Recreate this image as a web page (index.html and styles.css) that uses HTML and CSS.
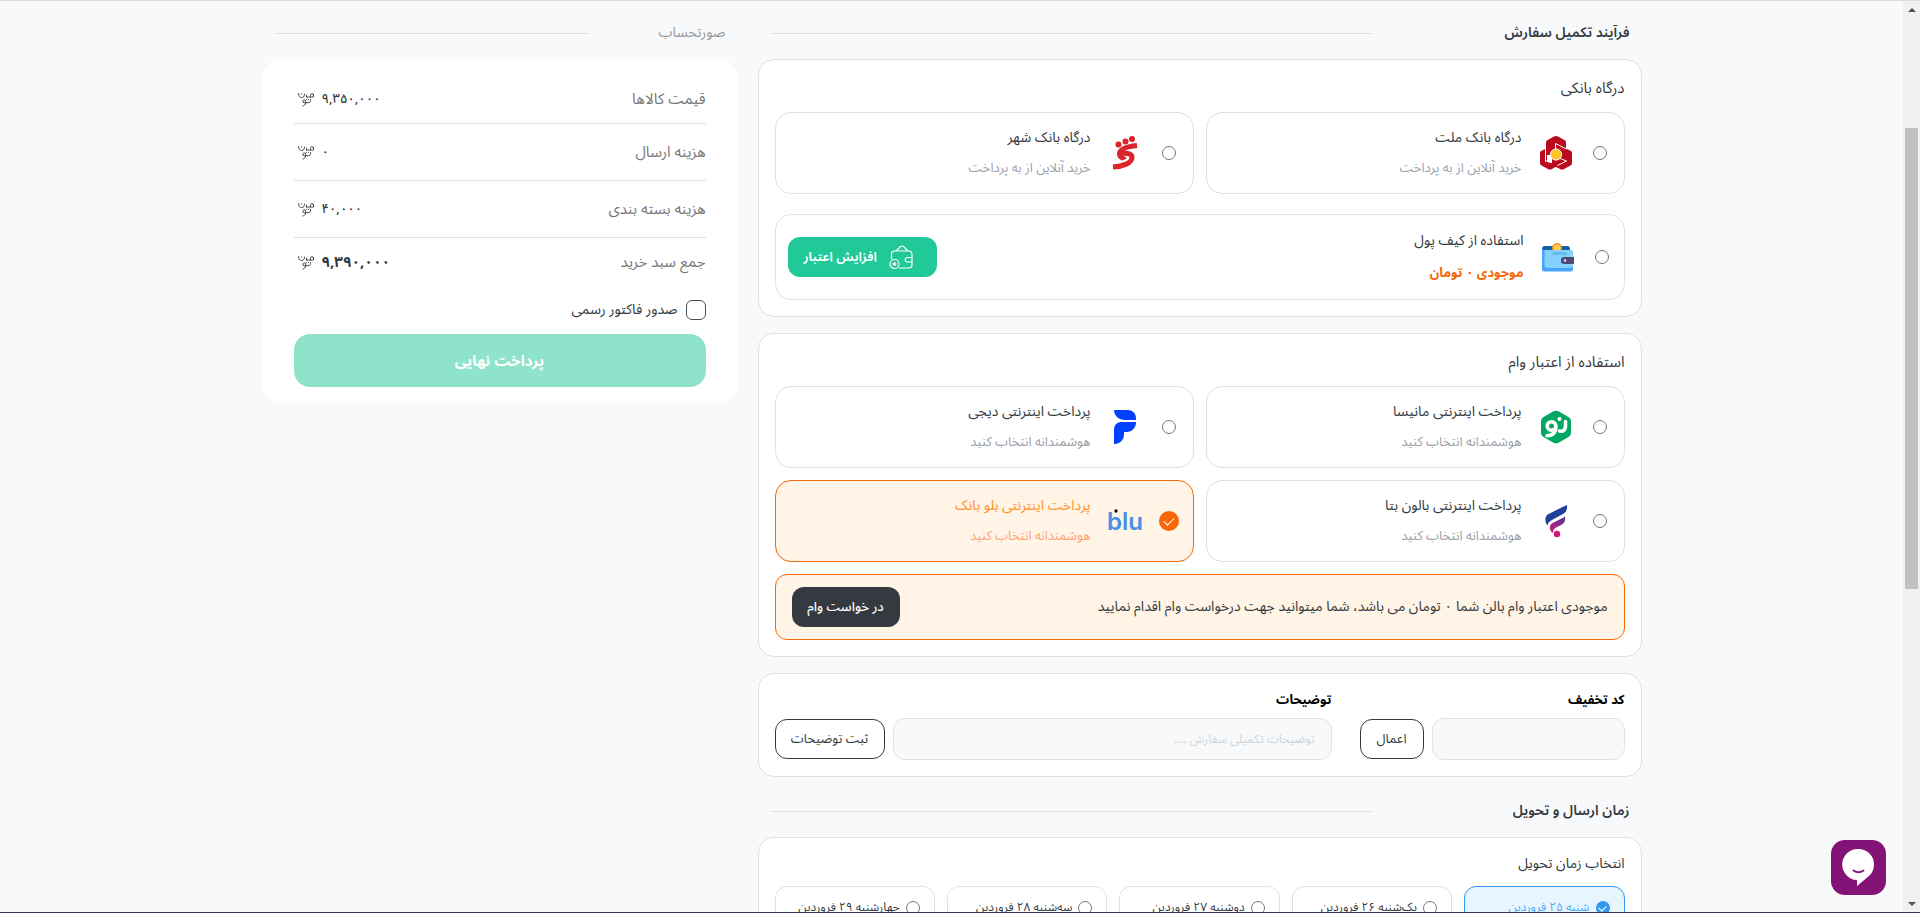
FILE: index.html
```html
<!DOCTYPE html>
<html lang="fa" dir="rtl">
<head>
  <meta charset="UTF-8">
  <meta name="viewport" content="width=device-width, initial-scale=1.0">
  <title>فرآیند تکمیل سفارش</title>
  <link rel="stylesheet" href="styles.css">
</head>
<body>
  <!-- currency symbol, reused in the invoice -->
  <svg class="defs" aria-hidden="true">
    <symbol id="toman" viewBox="0 0 16 16">
      <g fill="none" stroke="currentColor" stroke-width=".9" stroke-linecap="round">
        <path d="M15.500 3.500v2.500H8.500M15.500 4a1.500 1.500 0 1 0-3 .3c0 .8 0 1.200 0 1.700M8.500 6V4M.600 2.500c0 3 1 4 3 4S6.500 5.500 6.500 3"/>
        <path d="M12.500 8.500v1.200c0 1.500-1 2-2.500 2H7.500M7.600 11.200a1.500 1.500 0 1 0-1.500.600h1.500c0 2-1.300 2.900-2.800 3.200"/>
      </g>
      <g fill="currentColor"><circle cx="3.600" cy="2.800" r=".6"/><circle cx="8.600" cy="8.500" r=".5"/><circle cx="10.400" cy="8.500" r=".5"/></g>
    </symbol>
  </svg>

  <div class="window">
    <div class="page">
      <div class="container">

        <main class="checkout">
          <div class="section-head">
            <h2>فرآیند تکمیل سفارش</h2>
            <hr>
          </div>

          <section class="card">
            <h3>درگاه بانکی</h3>
            <div class="options">
              <label class="option">
                <input type="radio" name="payment">
                <svg class="logo" viewBox="0 0 34 34">
                  <g fill="#bb0a1e">
                    <path d="M17 0q1 0 2 .6l6.500 3.400q1.500 1 1.500 2.500V19H7V6.500Q7 5 8.500 4L15 .6Q16 0 17 0z"/>
                    <path d="M8 12v14l12 3-7 4q-2 1-4 0l-6.500-3.500Q1 28.500 1 27V17q0-1.500 1.500-2.300z"/>
                    <path d="M26 12l5.500 2.700Q33 15.500 33 17v10q0 1.500-1.500 2.500L25 33q-2 1-4 0l-8-4V17z"/>
                  </g>
                  <path d="M6.500 12v13.500l7-3.500M16.500 14V7.500l11 5.500M20 22l7.500 3-9 4.500" fill="none" stroke="#fff" stroke-width="1"/>
                  <circle cx="17" cy="18.500" r="5.600" fill="#ffc425" stroke="#fff" stroke-width="1"/>
                </svg>
                <span class="option-text">
                  <span class="option-title">درگاه بانک ملت</span>
                  <span class="option-sub">خرید آنلاین از به پرداخت</span>
                </span>
              </label>
              <label class="option">
                <input type="radio" name="payment">
                <svg class="logo" viewBox="0 0 34 34">
                  <g fill="#dc232c"><circle cx="10.500" cy="8.500" r="3"/><circle cx="17.500" cy="5.500" r="3"/><circle cx="24" cy="3" r="3"/></g>
                  <path d="M29 9.500C19 10.500 11.500 13 11.500 18c0 4 4 3.500 5 5.500M14 17.500c6-1 10 .5 10 4 0 5.500-9 9-19 9.500" fill="none" stroke="#dc232c" stroke-width="5"/>
                </svg>
                <span class="option-text">
                  <span class="option-title">درگاه بانک شهر</span>
                  <span class="option-sub">خرید آنلاین از به پرداخت</span>
                </span>
              </label>
            </div>

            <div class="wallet">
              <label class="wallet-label">
                <input type="radio" name="payment">
                <svg class="logo" viewBox="0 0 34 34">
                  <rect x="1" y="6" width="28" height="14" rx="3" fill="#1460a8"/>
                  <circle cx="16" cy="8" r="5" fill="#f7941d"/><circle cx="16" cy="8" r="3.500" fill="#ffd04f"/>
                  <path d="M1 9c1 1 2 1 4 1h24a3 3 0 0 1 3 3v16a2.500 2.500 0 0 1-2.500 2.500h-26A2.500 2.500 0 0 1 1 29z" fill="#47a4ff"/>
                  <path d="M3.500 10H29a3 3 0 0 1 3 3v12a3 3 0 0 1-3 3H7a3.500 3.500 0 0 1-3.500-3.500z" fill="#85d0fc"/>
                  <rect x="11" y="12" width="15" height="3" rx="1.500" fill="#63bdf0"/>
                  <path d="M23 17h10v7H23a3 3 0 0 1-3-3v-1a3 3 0 0 1 3-3z" fill="#514a78"/>
                  <circle cx="24" cy="20.500" r="1.200" fill="#d4eeff"/>
                </svg>
                <span class="option-text">
                  <span class="option-title">استفاده از کیف پول</span>
                  <span class="wallet-balance">موجودی ۰ تومان</span>
                </span>
              </label>
              <button class="btn btn-green" type="button">
                <svg class="btn-icon" viewBox="0 0 24 24" fill="none" stroke="#fff" stroke-width="1.200">
                  <path d="M7 6l4.500-4.500q1.500-1 3 0L19 6M2.500 14V9.500A3.500 3.500 0 0 1 6 6h13.500A3.500 3.500 0 0 1 23 9.500v10a3.500 3.500 0 0 1-3.500 3.500H10"/>
                  <path d="M23 12.500h-4.500a2 2 0 0 0 0 4.500H23"/>
                  <circle cx="5.500" cy="19" r="4.500"/><path d="M5.500 17v4M3.500 19h4" stroke-width="1.500"/>
                </svg>
                افزایش اعتبار
              </button>
            </div>
          </section>

          <section class="card">
            <h3>استفاده از اعتبار وام</h3>
            <div class="options">
              <label class="option">
                <input type="radio" name="payment">
                <svg class="logo" viewBox="0 0 34 34">
                  <path d="M14.500 1.300q2.500-1.300 5 0L29.500 7q2.500 1.400 2.500 4v12q0 2.600-2.500 4l-10 5.700q-2.500 1.300-5 0L4.500 27Q2 25.600 2 23V11q0-2.600 2.500-4z" fill="#00a862"/>
                  <g fill="none" stroke="#fff" stroke-width="3.600" stroke-linecap="round">
                    <circle cx="12.500" cy="16" r="4.300"/>
                    <path d="M16.800 16c.2 7-3 9.500-8.800 9.700M26.500 11.500v4c0 5-3 6.500-6 5.500"/>
                  </g>
                  <circle cx="20.500" cy="9" r="2" fill="#fff"/>
                </svg>
                <span class="option-text">
                  <span class="option-title">پرداخت اینترنتی مانیسا</span>
                  <span class="option-sub">هوشمندانه انتخاب کنید</span>
                </span>
              </label>
              <label class="option">
                <input type="radio" name="payment">
                <svg class="logo" viewBox="0 0 34 34" fill="#0040ff">
                  <path d="M6 0h14a8 8 0 0 1 8 8v2H16A10 10 0 0 1 6 0z"/>
                  <path d="M13 12h15v1a9 9 0 0 1-9 9h-3v3a9 9 0 0 1-9 9H6V19a7 7 0 0 1 7-7z"/>
                </svg>
                <span class="option-text">
                  <span class="option-title">پرداخت اینترنتی دیجی</span>
                  <span class="option-sub">هوشمندانه انتخاب کنید</span>
                </span>
              </label>
              <label class="option">
                <input type="radio" name="payment">
                <svg class="logo" viewBox="0 0 34 34">
                  <defs>
                    <linearGradient id="beta" x1="1" y1="0" x2="0" y2="1">
                      <stop offset="0" stop-color="#4b3a98"/><stop offset="1" stop-color="#d81b7d"/>
                    </linearGradient>
                  </defs>
                  <path d="M28 1c.5 4-.5 7-4 9L13 16c-3 1.700-4 3-4.500 5.500C5.500 18 5.500 12 9.500 10l14-7c2-.9 3.500-1.500 4.500-2z" fill="#21409a"/>
                  <path d="M26 12.500c.8 4-.5 6.500-3.500 8.200L17 23.500c-2 1.200-3 2.500-3 5.500-4-2.500-4.500-8-.5-10l8-4c2-.9 3.500-1.700 4.500-2.500z" fill="url(#beta)"/>
                  <circle cx="18" cy="30" r="3.200" fill="#dc147d"/>
                </svg>
                <span class="option-text">
                  <span class="option-title">پرداخت اینترنتی بالون بتا</span>
                  <span class="option-sub">هوشمندانه انتخاب کنید</span>
                </span>
              </label>
              <label class="option">
                <input type="radio" name="payment" checked>
                <svg class="logo" viewBox="0 0 34 34">
                  <text class="blu" x="17" y="26" text-anchor="middle">blu</text>
                  <circle cx="8" cy="7" r="1.700" fill="#111"/>
                </svg>
                <span class="option-text">
                  <span class="option-title">پرداخت اینترنتی بلو بانک</span>
                  <span class="option-sub">هوشمندانه انتخاب کنید</span>
                </span>
              </label>
            </div>

            <div class="notice">
              <p>موجودی اعتبار وام بالن شما ۰ تومان می باشد، شما میتوانید جهت درخواست وام اقدام نمایید</p>
              <button class="btn btn-dark" type="button">در خواست وام</button>
            </div>
          </section>

          <section class="card forms">
            <form class="discount">
              <label for="discount-code">کد تخفیف</label>
              <div class="field">
                <input type="text" id="discount-code">
                <button class="btn btn-outline" type="button">اعمال</button>
              </div>
            </form>
            <form class="notes">
              <label for="order-notes">توضیحات</label>
              <div class="field">
                <input type="text" id="order-notes" placeholder="توضیحات تکمیلی سفارش ....">
                <button class="btn btn-outline" type="button">ثبت توضیحات</button>
              </div>
            </form>
          </section>

          <div class="section-head">
            <h2>زمان ارسال و تحویل</h2>
            <hr>
          </div>

          <section class="card delivery">
            <h3>انتخاب زمان تحویل</h3>
            <div class="days">
              <label class="day"><input type="radio" name="day" checked><span>شنبه ۲۵ فروردین</span></label>
              <label class="day"><input type="radio" name="day"><span>یک‌شنبه ۲۶ فروردین</span></label>
              <label class="day"><input type="radio" name="day"><span>دوشنبه ۲۷ فروردین</span></label>
              <label class="day"><input type="radio" name="day"><span>سه‌شنبه ۲۸ فروردین</span></label>
              <label class="day"><input type="radio" name="day"><span>چهارشنبه ۲۹ فروردین</span></label>
            </div>
          </section>
        </main>

        <aside class="invoice">
          <div class="section-head">
            <h2>صورتحساب</h2>
            <hr>
          </div>
          <div class="invoice-card">
            <dl>
              <div class="row"><dt>قیمت کالاها</dt><dd>۹,۳۵۰,۰۰۰ <svg class="toman"><use href="#toman"/></svg></dd></div>
              <div class="row"><dt>هزینه ارسال</dt><dd>۰ <svg class="toman"><use href="#toman"/></svg></dd></div>
              <div class="row"><dt>هزینه بسته بندی</dt><dd>۴۰,۰۰۰ <svg class="toman"><use href="#toman"/></svg></dd></div>
              <div class="row total"><dt>جمع سبد خرید</dt><dd>۹,۳۹۰,۰۰۰ <svg class="toman"><use href="#toman"/></svg></dd></div>
            </dl>
            <label class="official">
              <input type="checkbox">
              <span>صدور فاکتور رسمی</span>
            </label>
            <button class="pay" type="button">پرداخت نهایی</button>
          </div>
        </aside>

      </div>
    </div>

    <div class="scrollbar" aria-hidden="true">
      <div class="arrow arrow-up"></div>
      <div class="space-before"></div>
      <div class="thumb"></div>
      <div class="space-after"></div>
      <div class="arrow arrow-down"></div>
    </div>
  </div>

  <button class="chat" type="button" aria-label="گفتگو">
    <svg viewBox="0 0 55 55">
      <path d="M27.500 9a15.500 15.500 0 0 1 15.500 15.500c0 5-2 8.500-5 11.500L26 46v-6A15.500 15.500 0 1 1 27.500 9z" fill="#fff"/>
      <path d="M22.500 30.500q5 3.500 10 0" fill="none" stroke="#831376" stroke-width="2" stroke-linecap="round"/>
    </svg>
  </button>
</body>
</html>
```

FILE: styles.css
```css
:root {
  --text: #343a40;
  --muted: #9ba1ab;
  --border: #dee2e6;
  --bg: #f8f9fb;
  --orange: #f76707;
  --orange-light: #fff4e6;
  --green: #20c997;
}

* {
  box-sizing: border-box;
}

body {
  margin: 0;
  height: 100vh;
  overflow: hidden;
  background: var(--bg);
  color: var(--text);
  font-family: "Noto Sans Arabic", "DejaVu Sans", sans-serif;
  font-size: 14px;
  line-height: 24px;
}

button,
input {
  font-family: inherit;
}

h2,
h3,
p,
dl,
dd,
hr {
  margin: 0;
}

.defs {
  position: absolute;
  width: 0;
  height: 0;
}

.window {
  display: flex;
  direction: ltr;
  height: 100vh;
  border-top: 1px solid #dcdcdf;
  border-bottom: 1px solid #343a55;
}

.page {
  flex: 1;
  direction: rtl;
  overflow: hidden;
}

.container {
  display: flex;
  align-items: flex-start;
  gap: 20px;
  max-width: 1380px;
  margin: 0 auto;
  padding-top: 14px;
}

.checkout {
  flex: 1;
}

.invoice {
  width: 476px;
}

.section-head {
  display: flex;
  align-items: center;
  height: 44px;
  padding: 0 12px 8px;
}

.section-head h2 {
  width: 30%;
  font-size: 14px;
  font-weight: 600;
}

.section-head hr {
  flex: 1;
  border: 0;
  border-top: 1px solid var(--border);
}

.invoice .section-head h2 {
  color: #999;
  font-weight: 400;
}

/* cards */
.card {
  margin-bottom: 16px;
  padding: 16px;
  background: #fff;
  border: 1px solid var(--border);
  border-radius: 16px;
}

.card h3 {
  margin-bottom: 12px;
  font-size: 15px;
  font-weight: 400;
}

.options {
  display: grid;
  grid-template-columns: 1fr 1fr;
  gap: 12px;
}

.option,
.wallet {
  display: flex;
  align-items: center;
  border: 1px solid var(--border);
  border-radius: 16px;
}

.option {
  gap: 16px;
  padding: 10px 14px;
}

.wallet {
  justify-content: space-between;
  margin-top: 20px;
  padding: 10px 12px;
}

.wallet-label {
  display: flex;
  align-items: center;
  gap: 16px;
}

.logo {
  width: 36px;
  height: 34px;
}

.blu {
  direction: ltr;
  fill: #4a8fe7;
  font: 600 24px Inter, sans-serif;
}

.option-text span {
  display: block;
  line-height: 30px;
}

.wallet .option-text span {
  line-height: 32px;
}

.option-title {
  font-size: 14px;
}

.option-sub {
  color: var(--muted);
  font-size: 13px;
}

.wallet-balance {
  color: var(--orange);
  font-size: 13px;
  font-weight: 700;
}

input[type="radio"] {
  appearance: none;
  display: grid;
  place-items: center;
  flex: none;
  width: 14px;
  height: 14px;
  margin: 3px;
  background: #fff;
  border: 1px solid #767676;
  border-radius: 50%;
}

input[type="radio"]:checked {
  width: 20px;
  height: 20px;
  margin: 0;
  background: var(--orange);
  border: 0;
}

input[type="radio"]:checked::after {
  content: "";
  width: 9px;
  height: 5px;
  margin-bottom: 3px;
  border-left: 1px solid #fff;
  border-bottom: 1px solid #fff;
  transform: rotate(-45deg);
}

.option:has(:checked) {
  background: var(--orange-light);
  border-color: var(--orange);
}

.option:has(:checked) .option-title {
  color: #ff922b;
}

.option:has(:checked) .option-sub {
  color: #ffa477;
}

.notice {
  display: flex;
  align-items: center;
  justify-content: space-between;
  margin-top: 12px;
  padding: 12px 16px;
  background: var(--orange-light);
  border: 1px solid var(--orange);
  border-radius: 12px;
}

/* buttons */
.btn {
  display: flex;
  align-items: center;
  justify-content: center;
  flex: none;
  height: 40px;
  padding: 0 15px;
  border: 0;
  border-radius: 12px;
  font-size: 13px;
  cursor: pointer;
}

.btn-green {
  gap: 12px;
  padding: 0 24px 0 16px;
  background: var(--green);
  color: #fff;
  font-weight: 600;
}

.btn-icon {
  width: 24px;
  height: 24px;
}

.btn-dark {
  min-width: 108px;
  background: var(--text);
  color: #fff;
  font-weight: 500;
}

.btn-outline {
  min-width: 64px;
  background: #fff;
  border: 1px solid var(--text);
  color: var(--text);
}

.notes .btn-outline {
  min-width: 110px;
}

/* discount and notes */
.forms {
  display: flex;
  gap: 28px;
}

.discount {
  width: 265px;
}

.notes {
  flex: 1;
}

.forms label {
  display: block;
  margin-bottom: 8px;
  color: #000;
  font-size: 13px;
  font-weight: 700;
  line-height: 20px;
}

.field {
  display: flex;
  align-items: center;
  gap: 8px;
}

.field input {
  flex: 1;
  min-width: 0;
  height: 42px;
  padding: 0 16px;
  background: var(--bg);
  border: 1px solid var(--border);
  border-radius: 12px;
  font-size: 12px;
}

.field input::placeholder {
  color: #ced4da;
}

/* delivery days */
.delivery {
  padding-top: 14px;
}

.delivery h3 {
  margin-bottom: 10px;
  font-size: 14px;
}

.days {
  display: grid;
  grid-template-columns: repeat(5, 1fr);
  gap: 12px;
}

.day {
  display: flex;
  align-items: center;
  gap: 6px;
  height: 44px;
  padding: 0 14px;
  border: 1px solid var(--border);
  border-radius: 12px;
  font-size: 12px;
  white-space: nowrap;
}

.day input[type="radio"] {
  width: 14px;
  height: 14px;
  margin: 0;
}

.day input[type="radio"]:checked {
  background: #339af0;
}

.day input[type="radio"]:checked::after {
  width: 6px;
  height: 4px;
  margin-bottom: 2px;
}

.day:has(:checked) {
  background: #e7f5ff;
  border-color: #339af0;
  color: #4dabf7;
}

/* invoice */
.invoice-card {
  padding: 16px 32px;
  background: #fff;
  border-radius: 20px;
}

.row {
  display: flex;
  align-items: center;
  justify-content: space-between;
  padding: 16px 0;
  border-bottom: 1px solid var(--border);
}

.row:first-child {
  padding: 12px 0;
}

.row.total {
  padding: 12px 0;
  border-bottom: 0;
}

.row dt {
  color: #777;
  font-size: 15px;
}

.row dd {
  display: flex;
  align-items: center;
  gap: 8px;
  padding-left: 4px;
  font-size: 13px;
  font-weight: 500;
}

.row.total dd {
  font-size: 15px;
  font-weight: 700;
}

.toman {
  width: 16px;
  height: 16px;
}

.official {
  display: flex;
  align-items: center;
  gap: 8px;
  margin: 12px 0;
}

.official input {
  appearance: none;
  width: 20px;
  height: 20px;
  margin: 0;
  border: 1px solid #495057;
  border-radius: 6px;
}

.pay {
  display: block;
  width: 100%;
  height: 53px;
  background: var(--green);
  border: 0;
  border-radius: 16px;
  color: #fff;
  font-size: 15px;
  font-weight: 700;
  opacity: 0.5;
}

/* scrollbar */
.scrollbar {
  display: flex;
  flex-direction: column;
  align-items: center;
  width: 17px;
  background: #f0f0f0;
}

.arrow {
  display: grid;
  place-items: center;
  width: 17px;
  height: 17px;
}

.arrow::after {
  content: "";
  border: 4px solid transparent;
}

.arrow-up::after {
  border-top: 0;
  border-bottom-color: #505050;
}

.arrow-down::after {
  border-bottom: 0;
  border-top-color: #505050;
}

.space-before {
  flex: 110;
}

.thumb {
  flex: 461;
  width: 13px;
  background: #c1c1c1;
}

.space-after {
  flex: 306;
}

.chat {
  position: fixed;
  right: 34px;
  bottom: 18px;
  width: 55px;
  height: 55px;
  padding: 0;
  background: #831376;
  border: 0;
  border-radius: 14px;
}

.chat svg {
  display: block;
}
```
